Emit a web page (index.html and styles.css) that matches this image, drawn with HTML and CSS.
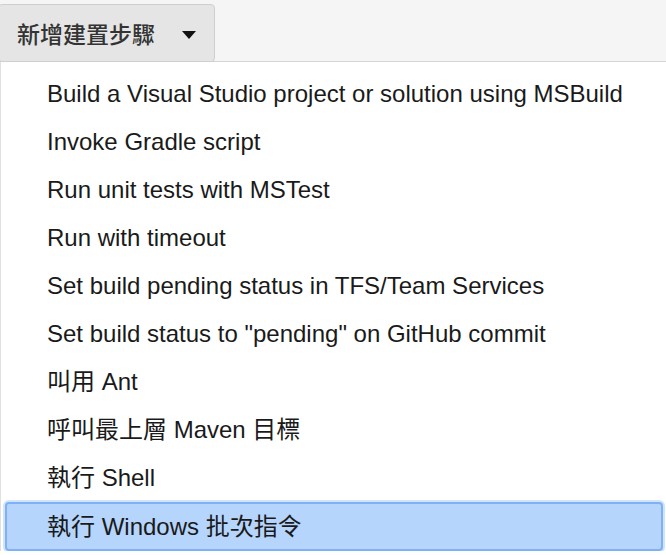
FILE: index.html
```html
<!DOCTYPE html>
<html lang="zh-Hant">
<head>
  <meta charset="UTF-8">
  <title>新增建置步驟</title>
  <link rel="stylesheet" href="styles.css">
</head>
<body>

  <div class="toolbar">
    <button class="addStep">新增建置步驟 <span class="caret"></span></button>
  </div>

  <ul class="menu">
    <li>Build a Visual Studio project or solution using MSBuild</li>
    <li>Invoke Gradle script</li>
    <li>Run unit tests with MSTest</li>
    <li>Run with timeout</li>
    <li>Set build pending status in TFS/Team Services</li>
    <li>Set build status to "pending" on GitHub commit</li>
    <li>叫用 Ant</li>
    <li>呼叫最上層 Maven 目標</li>
    <li>執行 Shell</li>
    <li class="selected">執行 Windows 批次指令</li>
  </ul>

</body>
</html>
```

FILE: styles.css
```css
body {
  margin: 0;
  background: #fff;
  font-family: "Liberation Sans", "Noto Sans CJK TC", sans-serif;
  color: #1a1a1a;
}
.toolbar {
  background: #f5f5f5;
  height: 62px;
  border-bottom: 1px solid #d4d4d4;
  display: flex;
  align-items: flex-start;
  padding-top: 4px;
  box-sizing: border-box;
}
.addStep {
  height: 58px;
  width: 217px;
  margin-left: -2px;
  background: #e5e5e5;
  border: 1px solid #cfcfcf;
  border-radius: 4px;
  font-family: "Noto Sans CJK TC", sans-serif;
  font-size: 23px;
  font-weight: 500;
  color: #333;
  display: flex;
  align-items: center;
  padding: 0 0 0 18px;
  gap: 27px;
}
.caret {
  width: 0;
  height: 0;
  border-left: 7px solid transparent;
  border-right: 7px solid transparent;
  border-top: 8px solid #111;
  margin-top: 3px;
}
.menu {
  list-style: none;
  margin: 0;
  padding: 8px 0 0 0;
  border-left: 1px solid #e0e0e0;
}
.menu li {
  height: 48px;
  line-height: 48px;
  padding-left: 46px;
  font-size: 24px;
  white-space: nowrap;
}
.menu li.selected {
  margin: 0 3px 0 4px;
  padding-left: 40px;
  height: 45px;
  line-height: 45px;
  background: #b5d5fd;
  border: 2px solid #7fb1f6;
  border-radius: 4px;
  box-shadow: 0 0 0 2px #d2e4fc;
}
```
